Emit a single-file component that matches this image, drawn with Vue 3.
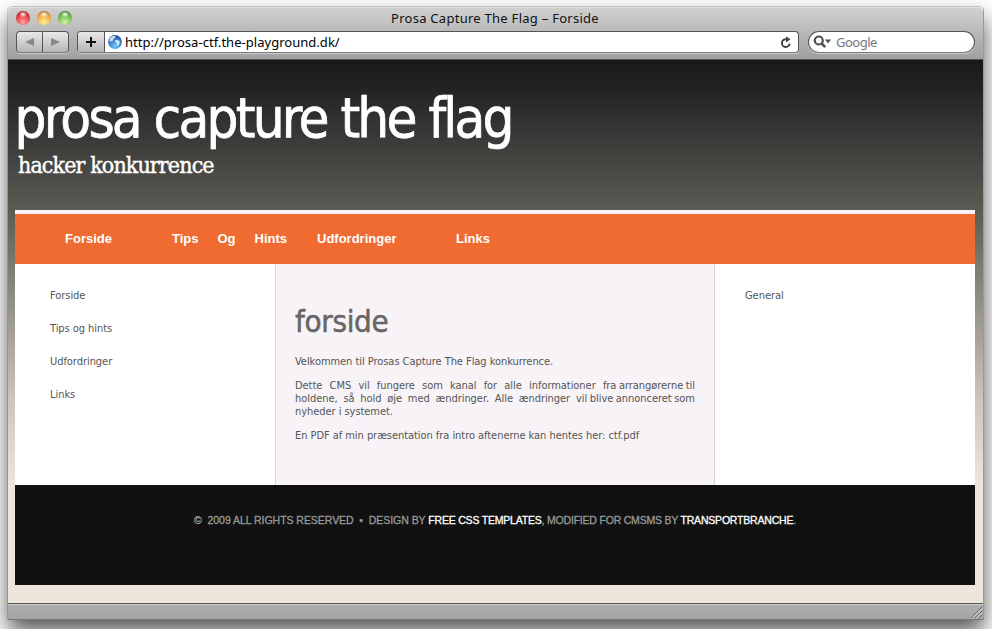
<script setup>
const nav = [
  { w: 107, words: ['Forside'] },
  { w: 145, words: ['Tips', 'Og', 'Hints'] },
  { w: 139, words: ['Udfordringer'] },
  { w: 60, words: ['Links'] }
]
const side = ['Forside', 'Tips og hints', 'Udfordringer', 'Links']
</script>

<template>
  <div class="desk">
    <div class="window">
      <header class="chrome">
        <div class="titlebar">
          <div class="lights"><i class="red"></i><i class="amber"></i><i class="green"></i></div>
          <span class="title">Prosa Capture The Flag – Forside</span>
        </div>
        <div class="toolbar">
          <div class="history">
            <span><svg width="9" height="8"><path d="M0 4L9 0V8Z" fill="#888" /></svg></span>
            <span><svg width="9" height="8"><path d="M9 4L0 0V8Z" fill="#888" /></svg></span>
          </div>
          <div class="address">
            <span class="plus"><svg width="10" height="10"><path d="M5 0V10M0 5H10" stroke="#111" stroke-width="2" /></svg></span>
            <svg class="globe" width="14" height="14" viewBox="0 0 14 14">
              <defs><radialGradient id="gl" cx="50%" cy="80%" r="75%"><stop offset="0" stop-color="#6fc4fa" /><stop offset="1" stop-color="#1c55a5" /></radialGradient></defs>
              <circle cx="7" cy="7" r="6.9" fill="url(#gl)" />
              <path d="M2 3C3.5 1.2 6 .8 7.5 1.2L7 3L5.5 4L4.5 6L2 6.5L1.2 5ZM7 5.5L9.5 4.8L12 6.5L11.5 8.5L9.8 11.5L8.8 9.5L8.6 7.8L7 7Z" fill="#e2f2fb" opacity=".85" />
            </svg>
            <span class="url">http://prosa-ctf.the-playground.dk/</span>
            <svg class="reload" width="12" height="13" viewBox="0 0 12 13"><path d="M7.5 3.2H5.8A3.9 3.9 0 1 0 9.7 7.6" fill="none" stroke="#444" stroke-width="1.9" /><path d="M6 .2L10.5 3.3L6 6.4Z" fill="#444" /></svg>
          </div>
          <div class="search">
            <svg width="19" height="14" viewBox="0 0 19 14"><circle cx="5.8" cy="5.5" r="4" fill="none" stroke="#505050" stroke-width="2.2" /><path d="M8.5 8.3L12.2 12.2" stroke="#505050" stroke-width="2.6" /><path d="M12 4.5H18L15 8.5Z" fill="#505050" /></svg>
            <span>Google</span>
          </div>
        </div>
      </header>
      <main class="page">
        <div class="masthead">
          <h1>prosa capture the flag</h1>
          <h2>hacker konkurrence</h2>
        </div>
        <nav class="menu">
          <a v-for="n in nav" :key="n.words[0]" :style="{ width: n.w + 'px' }"><span v-for="w in n.words" :key="w">{{ w }}</span></a>
        </nav>
        <div class="columns">
          <aside class="left"><a v-for="s in side" :key="s">{{ s }}</a></aside>
          <article>
            <h3>forside</h3>
            <p>Velkommen til Prosas Capture The Flag konkurrence.</p>
            <div class="para">
              <p class="line"><span>Dette</span> <span>CMS</span> <span>vil</span> <span>fungere</span> <span>som</span> <span>kanal</span> <span>for</span> <span>alle</span> <span>informationer</span> <span class="tight">fra arrangørerne til</span></p>
              <p class="line"><span>holdene,</span> <span>så</span> <span>hold</span> <span>øje</span> <span>med</span> <span>ændringer.</span> <span>Alle</span> <span>ændringer</span> <span class="tight">vil blive annonceret som</span></p>
              <p>nyheder i systemet.</p>
            </div>
            <p>En PDF af min præsentation fra intro aftenerne kan hentes her: ctf.pdf</p>
          </article>
          <aside class="right"><a>General</a></aside>
        </div>
        <footer><p><span class="rights">©&nbsp; 2009 ALL RIGHTS RESERVED &nbsp;•&nbsp; DESIGN BY </span><a>FREE CSS TEMPLATES</a>, MODIFIED FOR CMSMS BY <a>TRANSPORTBRANCHE</a>.</p></footer>
      </main>
      <div class="statusbar">
        <svg width="11" height="11" viewBox="0 0 11 11"><path d="M0 11L11 0M4 11L11 4M8 11L11 8" stroke="#666" /><path d="M1.3 11L11 1.3M5.3 11L11 5.3" stroke="#ddd" /></svg>
      </div>
    </div>
  </div>
</template>

<style>
body { margin: 0; overflow: hidden; }
</style>
<style scoped>
* { box-sizing: border-box; }
h1, h2, h3, p { margin: 0; font-weight: normal; white-space: nowrap; }
.desk { width: 992px; height: 629px; overflow: hidden; padding: 6px 8px 0; background: #fff; }
.window { width: 976px; height: 614px; display: flex; flex-direction: column; border-radius: 5px 5px 0 0; border: solid #999; border-width: 1px 1px 1px 0; border-top-color: #c4c4c4; border-bottom-color: #777; box-shadow: 0 12px 22px rgba(0,0,0,.66), -1px 0 0 rgba(0,0,0,.15); }
.chrome { height: 53px; flex: none; background: linear-gradient(#d0d0d0, #bababa 45%, #a0a0a0); border-top: 1px solid #e0e0e0; border-bottom: 1px solid #555; border-radius: 5px 5px 0 0; font-family: "Noto Sans", sans-serif; }
.titlebar { height: 23px; display: flex; align-items: center; padding-bottom: 3px; }
.lights { width: 383px; padding-left: 8px; display: flex; gap: 7px; }
.lights i { width: 14px; height: 14px; border-radius: 50%; }
.red { background: radial-gradient(ellipse 4px 3px at 50% 24%, #fff, transparent), radial-gradient(circle at 50% 80%, #ffa3a3, #e33438 60%, #85191d); }
.amber { background: radial-gradient(ellipse 4px 3px at 50% 24%, #fff, transparent), radial-gradient(circle at 50% 80%, #fff29a, #eda545 60%, #8a4e18); }
.green { background: radial-gradient(ellipse 4px 3px at 50% 24%, #fff, transparent), radial-gradient(circle at 50% 80%, #d2f2a0, #6bb84b 60%, #285c20); }
.title { font-size: 13px; line-height: 18px; letter-spacing: .27px; white-space: nowrap; color: #111; }
.toolbar { display: flex; height: 22px; padding: 0 8px; }
.history, .address { height: 22px; border: 1px solid #555; border-bottom-color: #777; border-radius: 4px; display: flex; align-items: center; box-shadow: 0 1px #ccc; }
.history { width: 53px; margin-right: 8px; background: linear-gradient(#e9e9e9, #b6b6b6); }
.history span { flex: 1; height: 20px; display: flex; align-items: center; justify-content: center; }
.history span + span { border-left: 1px solid #555; }
.address { width: 722px; background: #fff; overflow: hidden; }
.plus { width: 27px; height: 20px; flex: none; border-right: 1px solid #555; background: linear-gradient(#e9e9e9, #b6b6b6); display: flex; align-items: center; justify-content: center; }
.globe { margin: 0 3px; flex: none; }
.url { font-size: 13px; letter-spacing: .03px; white-space: nowrap; color: #000; }
.reload { margin: 0 6px 0 auto; }
.search { margin-left: 9px; width: 167px; height: 22px; border: 1px solid #555; border-bottom-color: #777; border-radius: 11px; background: #fff; display: flex; align-items: center; gap: 4px; padding-left: 4px; font-size: 13px; letter-spacing: -.5px; color: #777; box-shadow: 0 1px #ccc; }
.page { height: 543px; flex: none; padding: 0 8px 0 7px; background: linear-gradient(#191917 0, #22211f 25px, #393836 75px, #5b5a54 150px, #96938a 250px, #ccc5b9 340px, #eee6db 425px); }
.masthead { height: 150px; padding-top: 20px; color: #fff; }
h1 { font: 56px/76px "DejaVu Sans", sans-serif; font-stretch: condensed; letter-spacing: -2.8px; word-spacing: .5px; -webkit-text-stroke: .7px #fff; margin-left: -.5px; }
h2 { font: 23px/28px "DejaVu Serif", serif; font-stretch: condensed; padding-left: 3px; letter-spacing: -.9px; margin-top: -5px; -webkit-text-stroke: .4px #fff; }
.menu { height: 54px; border-top: 4px solid #f7f3f7; background: #f06b31; padding: 0 0 2px 50px; display: flex; align-items: center; }
.menu a { font: bold 13px "Liberation Sans", sans-serif; color: #fff; white-space: nowrap; display: flex; gap: 19px; }
.columns { display: grid; grid-template-columns: 260px 440px 260px; height: 221px; background: #fff; color: #555; font: 11px/13px "DejaVu Sans", sans-serif; font-stretch: condensed; }
.left { padding: 25px 35px; display: flex; flex-direction: column; gap: 20px; }
article { background: #f7f3f7; border: solid #d8d4d8; border-width: 0 1px; padding: 38px 19px 0; }
.columns a, .columns p { letter-spacing: -.05px; }
.columns h3 { font: 31px/38px "DejaVu Sans", sans-serif; font-stretch: condensed; color: #666; margin-bottom: 15px; letter-spacing: -.3px; -webkit-text-stroke: .5px #666; }
.para { margin: 11px 0; }
.line { display: flex; justify-content: space-between; }
.tight { word-spacing: -.5px; }
.right { padding: 25px 30px; }
footer { height: 100px; background: #111; padding-top: 28px; text-align: center; }
footer p { font: 10.5px/14px "Liberation Sans", sans-serif; color: #999; letter-spacing: -.2px; -webkit-text-stroke: .3px currentColor; }
.rights { letter-spacing: -.04px; }
footer a { color: #fff; }
.statusbar { height: 16px; flex: none; border-top: 1px solid #555; background: linear-gradient(#aeaeae, #a5a5a5); box-shadow: inset 0 1px #ccc; display: flex; justify-content: flex-end; align-items: flex-end; padding: 1px; }
</style>
